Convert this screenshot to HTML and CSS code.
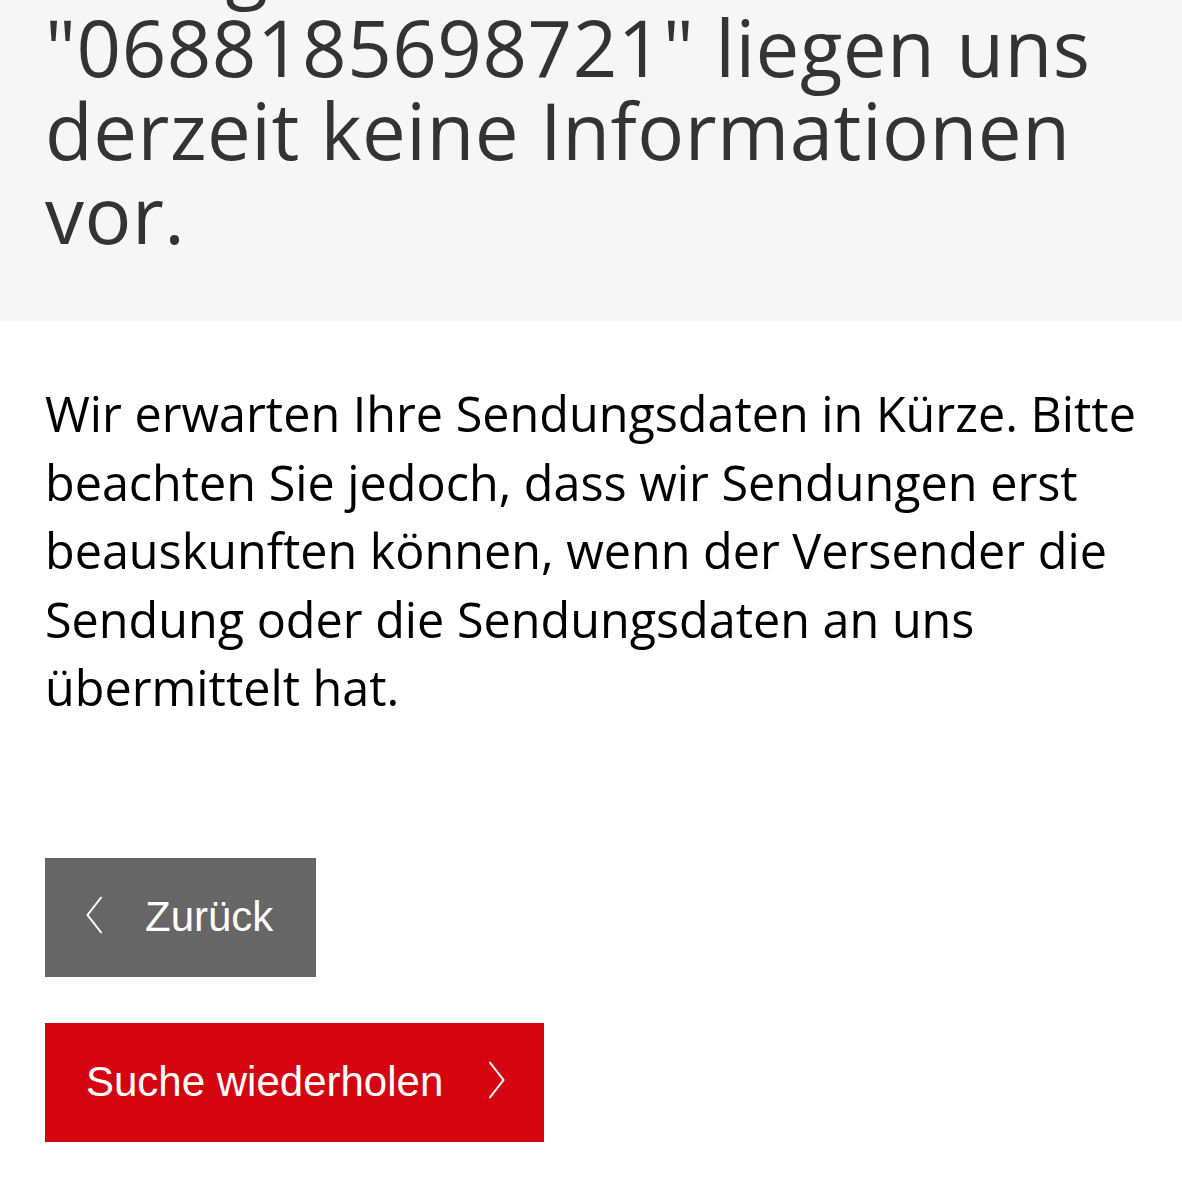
FILE: index.html
```html
<!DOCTYPE html>
<html lang="de">
<head>
<meta charset="utf-8">
<link rel="stylesheet" href="styles.css">
</head>
<body>
<header class="notice">
  <h1 class="notice-title">Bezüglich der Nummer<br>"0688185698721" liegen uns<br>derzeit keine Informationen<br>vor.</h1>
</header>
<main class="content">
  <p class="text">Wir erwarten Ihre Sendungsdaten in Kürze. Bitte beachten Sie jedoch, dass wir Sendungen erst beauskunften können, wenn der Versender die Sendung oder die Sendungsdaten an uns übermittelt hat.</p>
  <div class="actions">
    <a class="btn btn-back" href="#">
      <svg class="chev" width="17" height="38" viewBox="0 0 17 38"><path d="M15.5 1 L1.5 19 L15.5 37" fill="none" stroke="#fff" stroke-width="2"/></svg>
      <span>Zurück</span>
    </a>
    <a class="btn btn-search" href="#">
      <span>Suche wiederholen</span>
      <svg class="chev" width="17" height="38" viewBox="0 0 17 38"><path d="M1.5 1 L15.5 19 L1.5 37" fill="none" stroke="#fff" stroke-width="2"/></svg>
    </a>
  </div>
</main>
</body>
</html>
```
FILE: styles.css
```css
html, body {
  margin: 0;
  padding: 0;
  background: #fff;
}
body {
  font-family: "Open Sans", "Noto Sans", sans-serif;
  overflow: hidden;
}
.notice {
  background: #f6f6f6;
  height: 321px;
  overflow: hidden;
  padding: 0 45px;
  box-sizing: border-box;
}
.notice-title {
  margin: -78px 0 0 0;
  font-weight: 400;
  font-size: 78px;
  line-height: 83.5px;
  color: #333;
  letter-spacing: 0.5px;
}
.content {
  padding: 0 45px;
}
.text {
  margin: 0;
  padding-top: 58px;
  font-size: 48.5px;
  line-height: 68.5px;
  color: #000;
}
.actions {
  display: flex;
  flex-direction: column;
  align-items: flex-start;
  gap: 46px;
  margin-top: 136px;
}
.btn {
  display: flex;
  align-items: center;
  height: 119px;
  box-sizing: border-box;
  color: #fff;
  text-decoration: none;
  font-family: "Liberation Sans", Arial, sans-serif;
  font-size: 42px;
}
.btn-back {
  background: #666;
  width: 271px;
  padding-left: 41px;
  gap: 42px;
}
.btn-search {
  background: #d40511;
  width: 499px;
  padding-left: 41px;
  gap: 45px;
}
.chev {
  display: block;
  margin-top: -4px;
}
```
